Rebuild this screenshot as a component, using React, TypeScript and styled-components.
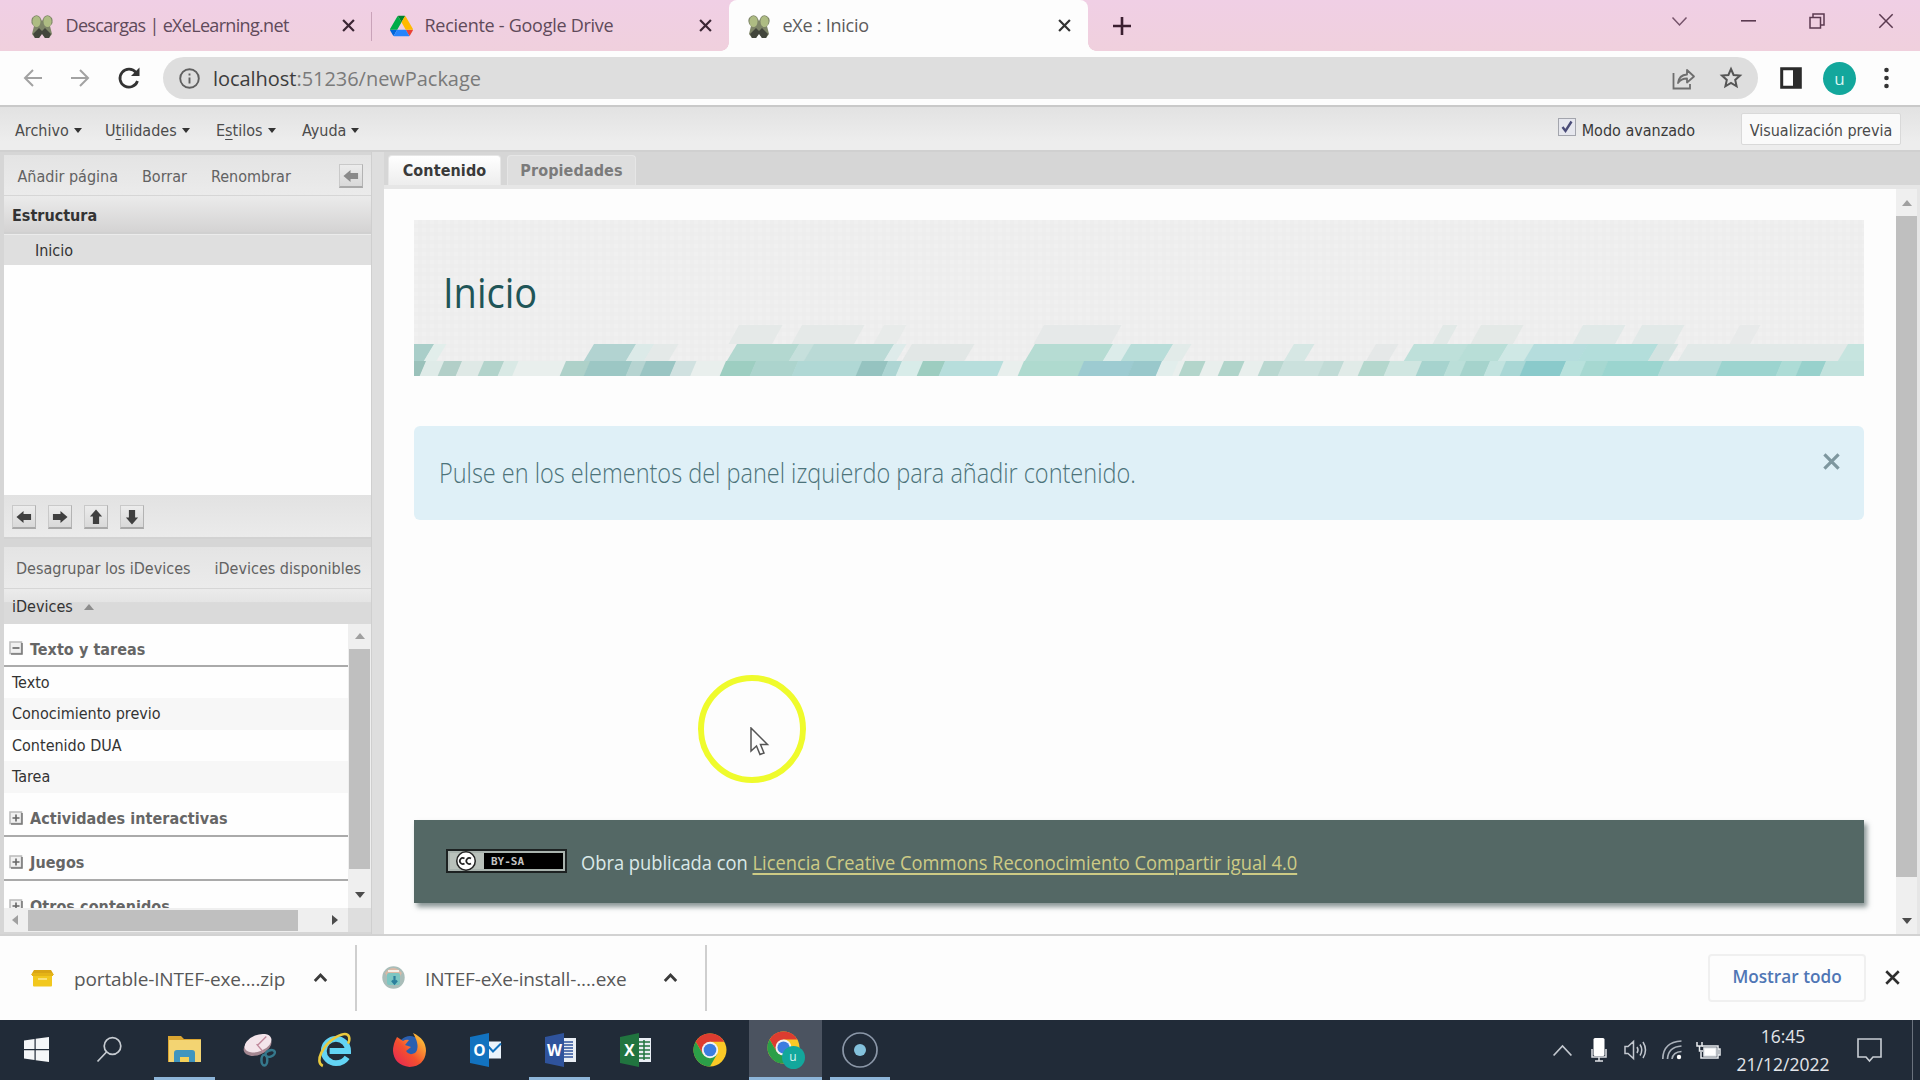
import React from "react";
import styled, { createGlobalStyle, css } from "styled-components";

const GlobalStyle = createGlobalStyle`
  * { box-sizing: border-box; }
  body { margin: 0; background: #fdfdfd; overflow: hidden; }
  button, a { font: inherit; }
`;

const uiFont = css`
  font-family: "Open Sans", "Noto Sans", sans-serif;
`;
const tahoma = css`
  font-family: "DejaVu Sans Condensed", "Noto Sans", sans-serif;
  font-size: 16px;
`;

const Screen = styled.div`
  width: 1920px;
  height: 1080px;
  display: flex;
  flex-direction: column;
  position: relative;
  overflow: hidden;
  background: #fdfdfd;
`;

const Icon = styled.svg<{ $w: number; $h?: number }>`
  width: ${(p) => p.$w}px;
  height: ${(p) => p.$h ?? p.$w}px;
  flex: none;
  display: block;
  overflow: visible;
`;

/* ---------- browser tab strip ---------- */
const TabStrip = styled.div`
  height: 51px;
  flex: none;
  display: flex;
  background: linear-gradient(#f0cfe5, #f0d0dd);
  ${uiFont}
`;
const BrowserTab = styled.div<{ $w: number; $active?: boolean; $pad: number; $divider?: boolean }>`
  position: relative;
  width: ${(p) => p.$w}px;
  height: 51px;
  display: flex;
  align-items: center;
  padding: 0 17px 0 ${(p) => p.$pad}px;
  color: #5f4a5a;
  font-size: 18px;
  ${(p) =>
    p.$active &&
    css`
      background: #fdfdfd;
      border-radius: 8px 8px 0 0;
      color: #5c5c5c;
      &::before,
      &::after {
        content: "";
        position: absolute;
        bottom: 0;
        width: 8px;
        height: 8px;
      }
      &::before { left: -8px; background: radial-gradient(circle at 0 0, transparent 7.5px, #fdfdfd 8px); }
      &::after { right: -8px; background: radial-gradient(circle at 100% 0, transparent 7.5px, #fdfdfd 8px); }
    `}
  ${(p) =>
    p.$divider &&
    css`
      &::after {
        content: "";
        position: absolute;
        right: 0;
        top: 12px;
        width: 1.5px;
        height: 29px;
        background: #c9a3b9;
      }
    `}
`;
const TabTitle = styled.span<{ $ls?: number }>`
  margin: -1px auto 0 11.5px;
  white-space: nowrap;
  letter-spacing: ${(p) => p.$ls ?? 0}px;
`;
const NewTab = styled.button`
  margin: 0 0 0 24px;
  padding: 0;
  border: 0;
  background: none;
  display: flex;
  align-items: center;
`;
const WindowControls = styled.div`
  margin-left: auto;
  display: flex;
  height: 42px;
  align-items: center;
`;
const WindowButton = styled.span`
  width: 68.7px;
  display: flex;
  justify-content: center;
`;

/* ---------- address bar ---------- */
const AddressRow = styled.div`
  height: 54px;
  flex: none;
  display: flex;
  align-items: center;
  background: #fdfdfd;
  padding: 0 0 0 23px;
  ${uiFont}
`;
const NavIcons = styled.div`
  display: flex;
  align-items: center;
  gap: 27px;
  width: 140px;
  flex: none;
`;
const UrlPill = styled.div`
  width: 1595px;
  height: 42px;
  border-radius: 21px;
  background: #dedede;
  display: flex;
  align-items: center;
  padding: 0 16px 0 16px;
  font-size: 20px;
  color: #7a7a7a;
`;
const Url = styled.span`
  margin: 0 auto 0 13px;
  letter-spacing: -0.04px;
`;
const Host = styled.span`
  color: #3c3c3c;
`;
const Avatar = styled.span<{ $size: number; $font: number }>`
  width: ${(p) => p.$size}px;
  height: ${(p) => p.$size}px;
  border-radius: 50%;
  background: #13a79c;
  color: #d8f5f2;
  display: flex;
  align-items: center;
  justify-content: center;
  font-family: "Open Sans", sans-serif;
  font-size: ${(p) => p.$font}px;
  line-height: 1;
`;
const PillIcons = styled.div`
  display: flex;
  gap: 25px;
  align-items: center;
`;
const RightIcons = styled.div`
  display: flex;
  align-items: center;
  gap: 21px;
  padding-left: 22px;
  > :last-child { margin-left: 6px; }
`;

/* ---------- application menu ---------- */
const MenuBar = styled.div`
  height: 47px;
  flex: none;
  display: flex;
  align-items: center;
  border-top: 2px solid #c9c9c9;
  border-bottom: 2px solid #d0d0d0;
  background: linear-gradient(#e2e2e2, #ededed 80%);
  padding: 3px 19px 0 15px;
  color: #4c4c4c;
  ${tahoma}
`;
const MenuItem = styled.span<{ $w: number }>`
  width: ${(p) => p.$w}px;
  display: flex;
  align-items: center;
  gap: 5px;
  u { text-underline-offset: 3px; }
`;
const Caret = styled.i<{ $dir?: "up" | "down" | "left" | "right"; $color?: string; $s?: number }>`
  width: 0;
  height: 0;
  flex: none;
  border: ${(p) => p.$s ?? 4}px solid transparent;
  ${(p) => {
    const s = p.$s ?? 4;
    const c = p.$color ?? "#333";
    if (p.$dir === "up") return `border-top: 0; border-bottom: ${s + 1}px solid ${c};`;
    if (p.$dir === "left") return `border-left: 0; border-right: ${s + 1}px solid ${c};`;
    if (p.$dir === "right") return `border-right: 0; border-left: ${s + 1}px solid ${c};`;
    return `border-bottom: 0; border-top: ${s + 1}px solid ${c};`;
  }}
`;
const CheckLabel = styled.label`
  margin-left: auto;
  display: flex;
  align-items: center;
  gap: 6px;
  color: #3a3a3a;
`;
const CheckBox = styled.span`
  width: 18px;
  height: 18px;
  margin-top: -6px;
  border: 1.5px solid #a3a5ad;
  background: #e6e7ee;
  display: flex;
  align-items: center;
  justify-content: center;
`;
const PreviewButton = styled.button`
  margin: -3px 0 0 46px;
  width: 160px;
  height: 32px;
  padding: 4px 0 0;
  border: 1px solid #d9d9d9;
  border-radius: 2px;
  background: #fafafa;
  color: #4a4a4a;
  ${tahoma}
`;

/* ---------- workspace ---------- */
const Workspace = styled.div`
  height: 784px;
  flex: none;
  display: flex;
  background: #dedede;
  border-bottom: 2px solid #d2d2d2;
`;
const Sidebar = styled.aside`
  width: 372px;
  margin-right: 12px;
  flex: none;
  padding: 3px 0 0 4px;
  display: flex;
  flex-direction: column;
  border-right: 1px solid #cfcfcf;
  background: #d6d6d6;
  color: #333;
  ${tahoma}
`;
const SideTools = styled.div<{ $h: number; $gap: number; $pl: number }>`
  height: ${(p) => p.$h}px;
  flex: none;
  display: flex;
  align-items: center;
  gap: ${(p) => p.$gap}px;
  padding: 2px 8px 0 ${(p) => p.$pl}px;
  color: #626262;
  background: linear-gradient(#e4e4e4, #ebebeb);
  border-bottom: 1px solid #d6d6d6;
`;
const SquareButton = styled.button<{ $push?: boolean }>`
  width: 24px;
  height: 24px;
  padding: 0;
  flex: none;
  margin-left: ${(p) => (p.$push ? "auto" : "0")};
  border: 1px solid #c9c9c9;
  border-bottom: 2px solid #a9a9a9;
  border-right-color: #b3b3b3;
  background: linear-gradient(#ececec, #d9d9d9);
  display: flex;
  align-items: center;
  justify-content: center;
`;
const PanelHeader = styled.div<{ $h: number; $bold?: boolean }>`
  height: ${(p) => p.$h}px;
  flex: none;
  display: flex;
  align-items: center;
  gap: 11px;
  padding: 2px 0 0 8px;
  font-weight: ${(p) => (p.$bold ? 700 : 400)};
  background: ${(p) =>
    p.$bold ? "linear-gradient(#ebebeb, #d4d3d3)" : "linear-gradient(#ebebeb, #e4e4e4 40%, #dadada 41%, #dadada)"};
  border-bottom: 2px solid ${(p) => (p.$bold ? "#d0d0d0" : "#dadada")};
`;
const TreeArea = styled.div`
  height: 261px;
  flex: none;
  background: #fefefe;
`;
const TreeRow = styled.div`
  height: 31px;
  padding-left: 31px;
  background: #dfdfdf;
  border-top: 1px solid #ebebeb;
  line-height: 32px;
`;
const MoveBar = styled.div`
  height: 44px;
  flex: none;
  margin-bottom: 8px;
  display: flex;
  align-items: center;
  gap: 12px;
  padding: 2px 0 0 8px;
  background: linear-gradient(#e2e2e2, #ebebeb);
  border-bottom: 2px solid #d2d2d2;
`;
const DeviceArea = styled.div`
  height: 284px;
  flex: none;
  display: flex;
  background: #fefefe;
`;
const DeviceList = styled.div`
  width: 344px;
  height: 284px;
  overflow: hidden;
`;
const Group = styled.div<{ $h: number }>`
  height: ${(p) => p.$h}px;
  display: flex;
  align-items: flex-end;
  gap: 7px;
  padding: 0 0 2px 5px;
  line-height: 24px;
  font-weight: 700;
  color: #666;
  border-bottom: 2px solid #aaa;
  span { padding-bottom: 1.5px; letter-spacing: 0.06px; }
  svg { margin-bottom: 8px; }
`;
const DeviceRow = styled.div<{ $alt?: boolean }>`
  height: 31.4px;
  line-height: 31px;
  padding-left: 8px;
  background: ${(p) => (p.$alt ? "#f7f7f7" : "#fefefe")};
`;
const VScroll = styled.div<{ $w: number; $pt: number }>`
  width: ${(p) => p.$w}px;
  flex: none;
  display: flex;
  flex-direction: column;
  align-items: center;
  justify-content: space-between;
  background: #efefef;
  padding: ${(p) => p.$pt}px 0 10px;
`;
const VThumb = styled.div<{ $h: number; $mb: number }>`
  width: 21px;
  height: ${(p) => p.$h}px;
  margin-bottom: ${(p) => p.$mb}px;
  background: #bfbfbf;
`;
const HScroll = styled.div`
  width: 344px;
  height: 24px;
  display: flex;
  align-items: center;
  padding: 0 10px 0 8px;
  background: #efefef;
`;
const HThumb = styled.div`
  width: 270px;
  height: 21px;
  margin: 0 auto 0 10px;
  background: #bfbfbf;
`;
const ScrollRow = styled.div`
  display: flex;
  height: 24px;
  flex: none;
  background: #dedede;
`;

const Main = styled.main`
  flex: 1;
  display: flex;
  flex-direction: column;
`;
const ContentTabs = styled.div`
  height: 37px;
  flex: none;
  display: flex;
  align-items: flex-end;
  gap: 6px;
  padding-left: 4px;
  background: #d6d6d6;
  border-bottom: 4px solid #e6e6e6;
`;
const ContentTab = styled.span<{ $w: number; $active?: boolean }>`
  width: ${(p) => p.$w}px;
  height: 30px;
  border-radius: 4px 4px 0 0;
  border: 1px solid #e6e6e6;
  border-bottom: 0;
  background: ${(p) => (p.$active ? "linear-gradient(#fff, #ededed)" : "#dedede")};
  color: ${(p) => (p.$active ? "#3a3a3a" : "#7b7b7b")};
  text-align: center;
  line-height: 30px;
  font-weight: 700;
  letter-spacing: 0.1px;
  ${tahoma}
`;
const PageArea = styled.div`
  flex: 1;
  display: flex;
  background: #fdfdfd;
  border-right: 3px solid #e6e6e6;
`;
const Page = styled.div`
  flex: 1;
  padding: 31px 32px 0 30px;
  display: flex;
  flex-direction: column;
`;
const narrow = (ratio: number) => css`
  white-space: nowrap;
  transform: scaleX(${ratio});
  transform-origin: 0 50%;
`;
const Banner = styled.header`
  height: 156px;
  flex: none;
  display: grid;
  background: #eee;
  > * { grid-area: 1 / 1; }
`;
const BannerTitle = styled.h1`
  margin: 0 0 0 29px;
  padding: 43px 0 0;
  font: 400 42px/58px "Open Sans", sans-serif;
  color: #1f5557;
  ${narrow(0.905)}
`;
const Alert = styled.div`
  height: 94px;
  flex: none;
  margin-top: 50px;
  border-radius: 6px;
  background: #dff0f7;
  display: flex;
  justify-content: space-between;
  padding: 0 24px 0 25px;
  svg { margin-top: 27px; }
`;
const AlertText = styled.p`
  margin: 0;
  width: 740px;
  font: 300 27px/94px "Open Sans", sans-serif;
  color: #4c737a;
  ${narrow(0.87)}
`;
const Footer = styled.footer`
  height: 83px;
  flex: none;
  margin-top: 300px;
  background: #546865;
  box-shadow: 3px 4px 5px rgba(60, 80, 80, 0.6);
  display: flex;
  align-items: center;
  padding: 2px 0 0 32px;
`;
const FooterText = styled.p`
  margin: 0 0 0 14px;
  font: 400 20px/28px "Open Sans", sans-serif;
  color: #dbe9e8;
  ${narrow(0.915)}
`;
const LicenceLink = styled.a`
  color: #cdcb85;
  text-decoration: underline;
  text-decoration-thickness: 1.5px;
  text-underline-offset: 3px;
`;
const CcBadge = styled.span`
  width: 121px;
  height: 24px;
  margin-top: -3px;
  border: 2px solid #1d2222;
  background: #000;
  box-shadow: inset 0 0 0 2px #a9b3ae;
  display: flex;
  align-items: center;
  gap: 7px;
  color: #c4c4c4;
  font: 700 11px/1 "DejaVu Sans Mono", monospace;
`;

/* ---------- downloads shelf ---------- */
const Shelf = styled.div`
  height: 84px;
  flex: none;
  display: flex;
  align-items: center;
  background: #fdfdfd;
  padding-bottom: 1px;
  ${uiFont}
`;
const Download = styled.div<{ $w: number; $pl: number }>`
  width: ${(p) => p.$w}px;
  height: 66px;
  display: flex;
  align-items: center;
  justify-content: space-between;
  padding: 0 28px 0 ${(p) => p.$pl}px;
  border-right: 2px solid #cfcfcf;
  font-size: 19px;
  color: #585858;
`;
const FileName = styled.span`
  margin: 2px auto 0 20px;
  letter-spacing: -0.13px;
`;
const ShowAll = styled.button`
  margin: 0 19px 0 auto;
  width: 158px;
  height: 48px;
  padding: 0 0 3px;
  border: 2px solid #f0f0f0;
  border-radius: 4px;
  background: #fdfdfd;
  color: #4f76b5;
  font: 600 17.2px "Open Sans", sans-serif;
`;
const ShelfClose = styled.span`
  width: 35px;
`;

/* ---------- taskbar ---------- */
const Taskbar = styled.div`
  height: 60px;
  flex: none;
  display: flex;
  background: #212b38;
  color: #e3e6ea;
  ${uiFont}
`;
const TaskButton = styled.span<{ $w?: number; $line?: number; $active?: boolean }>`
  width: ${(p) => p.$w ?? 75}px;
  height: 60px;
  flex: none;
  display: flex;
  align-items: center;
  justify-content: center;
  padding-bottom: 1px;
  background: ${(p) =>
    `${p.$line ? "linear-gradient(#8db5d9,#8db5d9) center bottom / " + p.$line + "px 3px no-repeat," : ""} ${
      p.$active ? "#4b5360" : "transparent"
    }`};
`;
const Tray = styled.div`
  margin-left: auto;
  display: flex;
  align-items: center;
`;
const TrayIcon = styled.span<{ $w: number }>`
  width: ${(p) => p.$w}px;
  display: flex;
  justify-content: center;
`;
const Clock = styled.div`
  width: 112px;
  text-align: center;
  font-size: 17.5px;
  line-height: 28px;
  margin-left: 3px;
`;
const DesktopEdge = styled.span`
  height: 60px;
  width: 8px;
  border-left: 1.5px solid #6a727d;
`;

/* ---------- pointer highlight ---------- */
const Pointer = styled.div`
  position: absolute;
  left: 698px;
  top: 675px;
  width: 108px;
  height: 108px;
  border: 6px solid #effb2c;
  border-radius: 50%;
`;
const PointerArrow = styled.svg`
  position: absolute;
  left: 46px;
  top: 46px;
  width: 20px;
  height: 30px;
`;

const Cross = ({ s, c, w = 2.2 }: { s: number; c: string; w?: number }) => (
  <Icon $w={s} viewBox="0 0 12 12" fill="none" stroke={c} strokeWidth={(w * 12) / s}>
    <path d="M1 1 11 11M11 1 1 11" />
  </Icon>
);

const ExeFavicon = () => (
  <Icon $w={24} viewBox="0 0 24 24">
    <path d="M2 4Q6-1 10 3L12 7 14 3Q18-1 22 4Q24 9 20 12L22 20 19 24H15L12 19 9 24H5L2 20 4 12Q0 9 2 4Z" fill="#7e8568" />
    <ellipse cx="6.5" cy="7.500" rx="4" ry="5.600" fill="#aebc83" />
    <ellipse cx="17.5" cy="7.500" rx="4" ry="5.600" fill="#aebc83" />
    <path d="M3 20 9 14 12 17 15 14 21 20 19 24H15L12 20 9 24H5Z" fill="#43463c" />
  </Icon>
);

const DriveIcon = () => (
  <Icon $w={23} $h={22} viewBox="0 0 87.3 78">
    <path d="m6.6 66.85 3.85 6.65c.8 1.4 1.95 2.5 3.3 3.3l13.75-23.8h-27.5c0 1.55.4 3.1 1.2 4.5z" fill="#0066da" />
    <path d="m43.65 25-13.75-23.8c-1.35.8-2.5 1.9-3.3 3.3l-25.4 44a9 9 0 0 0-1.2 4.5h27.5z" fill="#00ac47" />
    <path d="m73.55 76.8c1.35-.8 2.5-1.9 3.3-3.3l1.6-2.75 7.65-13.25c.8-1.4 1.2-2.95 1.2-4.5h-27.5l5.85 11.5z" fill="#ea4335" />
    <path d="m43.65 25 13.75-23.8c-1.35-.8-2.9-1.2-4.5-1.2h-18.5c-1.6 0-3.15.45-4.5 1.2z" fill="#00832d" />
    <path d="m59.8 53h-32.3l-13.75 23.8c1.35.8 2.9 1.2 4.5 1.2h50.8c1.6 0 3.15-.45 4.5-1.2z" fill="#2684fc" />
    <path d="m73.4 26.5-12.7-22c-.8-1.4-1.95-2.5-3.3-3.3l-13.75 23.8 16.15 28h27.45c0-1.55-.4-3.1-1.2-4.5z" fill="#ffba00" />
  </Icon>
);

const Arrow = ({ turn = 0, c = "#3f3f3f" }: { turn?: number; c?: string }) => (
  <Icon $w={16} viewBox="0 0 17 17">
    <path d="M.5 8.500 8 2V5.200H16V11.800H8V15Z" fill={c} transform={`rotate(${turn} 8.5 8.5)`} />
  </Icon>
);

const Toggle = ({ plus }: { plus?: boolean }) => (
  <Icon $w={14} viewBox="0 0 14 14" fill="none">
    <path d="M1 1H12.500V12.500H1Z" fill="#f1f1f1" stroke="#bbb" strokeWidth="1.5" />
    <path d="M13 2V13H2" stroke="#777" strokeWidth="1.5" />
    <path d={plus ? "M3.500 7H10.500M7 3.500V10.500" : "M3.500 7H10.500"} stroke="#666" strokeWidth="1.6" />
  </Icon>
);

/* x at the top edge of the cell, width, row, colour */
type Cell = [number, number, 0 | 1 | 2, string];
const rowTop = [105, 124, 141];
const rowHeight = [19, 17, 15];
const rowSlant = [0.55, 0.6, 0.42];
const cells: Cell[] = [
  [325, 43, 0, "#e5e9e8"], [388, 62, 0, "#e5e9e8"], [470, 22, 0, "#e8ebea"], [630, 77, 0, "#e6e9e9"],
  [1029, 14, 0, "#e2e9e7"], [1067, 42, 0, "#e4e9e7"], [1169, 42, 0, "#e1e9e8"], [1228, 42, 0, "#e2e9e8"], [1326, 20, 0, "#e8eaea"],
  [-20, 40, 1, "#a9cec9"], [20, 12, 1, "#e2eeeb"], [180, 42, 1, "#b2d3d1"], [222, 18, 1, "#dceae8"], [240, 24, 1, "#e4e9e8"],
  [323, 62, 1, "#b3d8d0"], [385, 15, 1, "#c6e0dc"], [400, 80, 1, "#badad6"], [480, 12, 1, "#deebea"], [498, 62, 1, "#e2e7e6"],
  [621, 78, 1, "#b6dcd3"], [699, 18, 1, "#dcecea"], [717, 42, 1, "#b8ddd9"], [759, 18, 1, "#e2ebe9"],
  [880, 20, 1, "#d6e7e4"], [962, 22, 1, "#e5e8e8"], [1000, 54, 1, "#bee0da"], [1054, 40, 1, "#b8ded7"], [1094, 26, 1, "#cfe8e5"],
  [1120, 54, 1, "#b5dddd"], [1174, 70, 1, "#b3dedb"], [1244, 20, 1, "#d3e3e1"], [1274, 160, 1, "#e2e9e8"], [1434, 60, 1, "#c6e4df"],
  [-20, 32, 2, "#9ac1ba"], [12, 18, 2, "#dfebe8"], [30, 18, 2, "#b2cfc8"], [48, 22, 2, "#dfe9e6"], [70, 20, 2, "#b2d3cb"], [90, 14, 2, "#d9e9e5"],
  [152, 24, 2, "#aed1c9"], [176, 42, 2, "#9cc7c4"], [218, 14, 2, "#b6d4d1"], [232, 30, 2, "#9ac5c3"], [262, 20, 2, "#d0e1e0"],
  [312, 30, 2, "#9dcec1"], [342, 42, 2, "#acd4cd"], [384, 64, 2, "#b0d8d5"], [448, 26, 2, "#95c3c0"], [474, 14, 2, "#add5d3"], [488, 21, 2, "#d8ece9"],
  [509, 22, 2, "#9dcdc0"], [531, 58, 2, "#b7dedc"], [610, 60, 2, "#afdacf"], [670, 50, 2, "#9dcbd1"], [720, 28, 2, "#99c8cb"], [748, 16, 2, "#e2eeec"],
  [771, 20, 2, "#b3d5cb"], [810, 20, 2, "#b0d4ca"], [850, 20, 2, "#b9d7d0"], [870, 40, 2, "#cbe1dd"], [910, 20, 2, "#c1dbd6"], [930, 20, 2, "#e1ebe8"],
  [950, 26, 2, "#b4d7cd"], [976, 32, 2, "#d0e6e1"], [1008, 28, 2, "#a6d3ce"], [1036, 16, 2, "#bbdfd9"], [1052, 24, 2, "#a5d3cc"], [1076, 16, 2, "#c2e3df"],
  [1092, 20, 2, "#a9d7d5"], [1112, 40, 2, "#8acacb"], [1152, 20, 2, "#b8e1dc"], [1172, 22, 2, "#a6d8d1"], [1194, 56, 2, "#9bd5cf"], [1250, 58, 2, "#b5dbd9"],
  [1308, 60, 2, "#9cd4cf"], [1368, 20, 2, "#addcd6"], [1388, 24, 2, "#98d1cc"], [1412, 60, 2, "#c2e2dd"],
];

const BannerArt = () => (
  <Icon $w={1450} $h={156} viewBox="0 0 1450 156">
    <defs>
      <pattern id="weave" width="8" height="8" patternUnits="userSpaceOnUse">
        <rect width="4" height="4" fill="#f0f0f0" />
        <rect x="4" y="4" width="4" height="4" fill="#ededed" />
      </pattern>
      <clipPath id="frame"><rect width="1450" height="156" /></clipPath>
    </defs>
    <rect width="1450" height="156" fill="#eee" />
    <rect width="1450" height="156" fill="url(#weave)" />
    <g clipPath="url(#frame)">
      <rect y="141" width="1450" height="15" fill="#e9efed" />
      {cells.map(([x, w, r, c], i) => {
        const t = rowTop[r], h = rowHeight[r], d = h * rowSlant[r];
        return <polygon key={i} fill={c} points={`${x},${t} ${x + w + 0.5},${t} ${x + w + 0.5 - d},${t + h} ${x - d},${t + h}`} />;
      })}
    </g>
  </Icon>
);

const ChromeLogo = ({ s = 34 }: { s?: number }) => (
  <Icon $w={s} viewBox="0 0 34 34">
    <circle cx="17" cy="17" r="16.500" fill="#fbc926" />
    <path d="M2.700 8.750A16.500 16.500 0 0 1 31.300 8.750H17L9.850 21.100Z" fill="#dc3c30" />
    <path d="M2.700 8.750A16.500 16.500 0 0 0 17 33.500L24.150 21.100 17 25 9.850 21.100Z" fill="#2b9f48" />
    <circle cx="17" cy="17" r="8.200" fill="#f3f3f3" />
    <circle cx="17" cy="17" r="6.300" fill="#3c7de0" />
  </Icon>
);

const GlyphText = styled.text`
  font-family: "Open Sans", sans-serif;
  font-weight: 700;
  fill: #fff;
`;
const OfficeIcon = ({ letter, color, kind }: { letter: string; color: string; kind: "mail" | "doc" | "grid" }) => (
  <Icon $w={32} $h={34} viewBox="0 0 32 34">
    {kind !== "mail" && <rect x="17" y="5" width="15" height="24" fill="#e9eef5" />}
    {kind === "mail" && <path d="M17 8.500H32V25.500H17Z" fill="#eaf3fb" />}
    {kind === "mail" && <path d="M18 12 24 18.500 32 10.500" fill="none" stroke={color} strokeWidth="2" />}
    {kind === "doc" && <path d="M20 9H29M20 12H29M20 15H29M20 18H29M20 21H29M20 24H29" stroke={color} strokeWidth="1.3" />}
    {kind === "grid" && <path d="M20 9H31M20 13H31M20 17H31M20 21H31M20 25H31M25 7V27" stroke={color} strokeWidth="1.5" />}
    <path d="M1 4 20 0V34L1 30Z" fill={color} />
    <GlyphText x="10.500" y="22.500" fontSize="15.500" textAnchor="middle">{letter}</GlyphText>
  </Icon>
);

const ActiveChrome = styled.span`
  display: grid;
  width: 38px;
  height: 38px;
  > * { grid-area: 1 / 1; }
  > :last-child { place-self: end; }
`;

export default function App() {
  return (
    <Screen>
      <GlobalStyle />
      <TabStrip>
        <BrowserTab $w={372} $pad={30} $divider>
          <ExeFavicon />
          <TabTitle $ls={-0.68}>Descargas | eXeLearning.net</TabTitle>
          <Cross s={13} c="#3b2634" />
        </BrowserTab>
        <BrowserTab $w={357} $pad={18}>
          <DriveIcon />
          <TabTitle $ls={-0.27}>Reciente - Google Drive</TabTitle>
          <Cross s={13} c="#3b2634" />
        </BrowserTab>
        <BrowserTab $w={359} $pad={18} $active>
          <ExeFavicon />
          <TabTitle $ls={-0.25}>eXe : Inicio</TabTitle>
          <Cross s={13} c="#333" />
        </BrowserTab>
        <NewTab>
          <Icon $w={20} viewBox="0 0 20 20" stroke="#3b1f30" strokeWidth="2.600"><path d="M10 1V19M1 10H19" /></Icon>
        </NewTab>
        <WindowControls>
          <WindowButton><Icon $w={15} $h={9} viewBox="0 0 15 9" fill="none" stroke="#75536a" strokeWidth="1.500"><path d="M.5 .5 7.500 8 14.500 .5" /></Icon></WindowButton>
          <WindowButton><Icon $w={15} $h={2} viewBox="0 0 15 2"><rect width="15" height="1.600" fill="#5b3a50" /></Icon></WindowButton>
          <WindowButton><Icon $w={16} viewBox="0 0 16 16" fill="none" stroke="#5b3a50" strokeWidth="1.500"><path d="M1 4.500H11.500V15H1ZM4 4V1H15V12H12" /></Icon></WindowButton>
          <WindowButton><Cross s={16} c="#5b3a50" w={1.500} /></WindowButton>
        </WindowControls>
      </TabStrip>

      <AddressRow>
        <NavIcons>
          <Icon $w={20} viewBox="0 0 20 20" fill="none" stroke="#a2a2a2" strokeWidth="2"><path d="M19 10H2M10 2 2 10 10 18" /></Icon>
          <Icon $w={20} viewBox="0 0 20 20" fill="none" stroke="#a2a2a2" strokeWidth="2"><path d="M1 10H18M10 2 18 10 10 18" /></Icon>
          <Icon $w={24} viewBox="0 0 24 24" fill="none" stroke="#333" strokeWidth="2.700"><path d="M20.500 15A9 9 0 1 1 19 6.500" /><path d="M22.500 1.500V10H14Z" fill="#333" stroke="none" /></Icon>
        </NavIcons>
        <UrlPill>
          <Icon $w={21} viewBox="0 0 21 21" fill="none" stroke="#606060" strokeWidth="1.900"><circle cx="10.500" cy="10.500" r="9.300" /><path d="M10.500 9.500V15.500M10.500 5.500V7.500" /></Icon>
          <Url><Host>localhost</Host>:51236/newPackage</Url>
          <PillIcons>
            <Icon $w={23} viewBox="0 0 23 23" fill="none" stroke="#6e6e6e" strokeWidth="1.800"><path d="M1.500 6V21.500H18V17" /><path d="M6 16Q7 8 15 7.500V3L22 9.500 15 15.500V11.500Q9 11.500 6 16Z" strokeLinejoin="round" /></Icon>
            <Icon $w={22} viewBox="0 0 22 22" fill="none" stroke="#555" strokeWidth="2"><path d="M11 2 13.600 8 20 8.600 15.200 12.900 16.600 19.300 11 16 5.400 19.300 6.800 12.900 2 8.600 8.400 8Z" /></Icon>
          </PillIcons>
        </UrlPill>
        <RightIcons>
          <Icon $w={22} viewBox="0 0 22 22"><path d="M1.700 1.700H20.300V20.300H1.700Z" fill="#fff" stroke="#2b2b2b" strokeWidth="3" /><rect x="13" y="1" width="8" height="20" fill="#2b2b2b" /></Icon>
          <Avatar $size={33} $font={17}>u</Avatar>
          <Icon $w={6} $h={22} viewBox="0 0 6 22" fill="#333"><circle cx="3.500" cy="3" r="2.300" /><circle cx="3.500" cy="11" r="2.300" /><circle cx="3.500" cy="19" r="2.300" /></Icon>
        </RightIcons>
      </AddressRow>

      <MenuBar>
        <MenuItem $w={90}>Archivo<Caret /></MenuItem>
        <MenuItem $w={111}><span>U<u>t</u>ilidades</span><Caret /></MenuItem>
        <MenuItem $w={86}><span>E<u>s</u>tilos</span><Caret /></MenuItem>
        <MenuItem $w={80}>Ayuda<Caret /></MenuItem>
        <CheckLabel>
          <CheckBox>
            <Icon $w={12} viewBox="0 0 12 12" fill="none" stroke="#4a4c78" strokeWidth="2.400"><path d="M1.500 6 4.500 10 10.500 .5" /></Icon>
          </CheckBox>
          Modo avanzado
        </CheckLabel>
        <PreviewButton>Visualización previa</PreviewButton>
      </MenuBar>

      <Workspace>
        <Sidebar>
          <SideTools $h={41} $gap={24} $pl={13.5}>
            <span>Añadir página</span><span>Borrar</span><span>Renombrar</span>
            <SquareButton $push><Arrow c="#8a8a8a" /></SquareButton>
          </SideTools>
          <PanelHeader $h={38} $bold>Estructura</PanelHeader>
          <TreeArea><TreeRow>Inicio</TreeRow></TreeArea>
          <MoveBar>
            <SquareButton><Arrow /></SquareButton>
            <SquareButton><Arrow turn={180} /></SquareButton>
            <SquareButton><Arrow turn={90} /></SquareButton>
            <SquareButton><Arrow turn={270} /></SquareButton>
          </MoveBar>
          <SideTools $h={42} $gap={24} $pl={12}>
            <span>Desagrupar los iDevices</span><span>iDevices disponibles</span>
          </SideTools>
          <PanelHeader $h={35}>iDevices<Caret $dir="up" $color="#8d8d8d" $s={5} /></PanelHeader>
          <DeviceArea>
            <DeviceList>
              <Group $h={43}><Toggle /><span>Texto y tareas</span></Group>
              <DeviceRow>Texto</DeviceRow>
              <DeviceRow $alt>Conocimiento previo</DeviceRow>
              <DeviceRow>Contenido DUA</DeviceRow>
              <DeviceRow $alt>Tarea</DeviceRow>
              <Group $h={44}><Toggle plus /><span>Actividades interactivas</span></Group>
              <Group $h={44}><Toggle plus /><span>Juegos</span></Group>
              <Group $h={44}><Toggle plus /><span>Otros contenidos</span></Group>
            </DeviceList>
            <VScroll $w={23} $pt={9}>
              <Caret $dir="up" $color="#a0a0a0" $s={5} />
              <VThumb $h={220} $mb={13} />
              <Caret $color="#4c4c4c" $s={5} />
            </VScroll>
          </DeviceArea>
          <ScrollRow>
            <HScroll>
              <Caret $dir="left" $color="#a0a0a0" $s={5} />
              <HThumb />
              <Caret $dir="right" $color="#4c4c4c" $s={5} />
            </HScroll>
          </ScrollRow>
        </Sidebar>

        <Main>
          <ContentTabs>
            <ContentTab $w={113} $active>Contenido</ContentTab>
            <ContentTab $w={129}>Propiedades</ContentTab>
          </ContentTabs>
          <PageArea>
            <Page>
              <Banner>
                <BannerArt />
                <BannerTitle>Inicio</BannerTitle>
              </Banner>
              <Alert>
                <AlertText>Pulse en los elementos del panel izquierdo para añadir contenido.</AlertText>
                <Cross s={17} c="#7e979f" w={3.200} />
              </Alert>
              <Footer>
                <CcBadge>
                  <Icon $w={36} $h={20} viewBox="0 0 36 20">
                    <rect x="2" y="2" width="34" height="16" fill="#b9c1bb" />
                    <circle cx="18" cy="10" r="10" fill="#222" />
                    <circle cx="18" cy="10" r="8.500" fill="#fff" />
                    <path d="M16.500 7.500A3 3 0 1 0 16.500 12.500M23 7.500A3 3 0 1 0 23 12.500" fill="none" stroke="#222" strokeWidth="1.700" />
                  </Icon>
                  BY-SA
                </CcBadge>
                <FooterText>
                  Obra publicada con <LicenceLink>Licencia Creative Commons Reconocimiento Compartir igual 4.0</LicenceLink>
                </FooterText>
              </Footer>
            </Page>
            <VScroll $w={21} $pt={11}>
              <Caret $dir="up" $color="#a0a0a0" $s={5} />
              <VThumb $h={661} $mb={32} />
              <Caret $color="#4c4c4c" $s={5} />
            </VScroll>
          </PageArea>
        </Main>
      </Workspace>

      <Shelf>
        <Download $w={357} $pl={31}>
          <Icon $w={23} $h={18} viewBox="0 0 23 18">
            <path d="M3 1H20L23 6H0Z" fill="#d9a514" /><rect x="2" y="5" width="19" height="12.500" rx="1" fill="#f2c81e" /><path d="M1 4H22V7H1Z" fill="#e5b416" /><rect x="7" y="9" width="9" height="2" fill="#f9e27a" />
          </Icon>
          <FileName>portable-INTEF-exe....zip</FileName>
          <Icon $w={13} $h={9} viewBox="0 0 13 9" fill="none" stroke="#3b3b3b" strokeWidth="2.800"><path d="M.8 8 6.500 2 12.200 8" /></Icon>
        </Download>
        <Download $w={350} $pl={25}>
          <Icon $w={23} viewBox="0 0 23 23">
            <circle cx="11.500" cy="11.500" r="11.200" fill="#a9bdb9" /><path d="M3 7Q11-3 20 7L18 10H5Z" fill="#d9b9a6" /><rect x="5" y="7" width="13" height="12" rx="2" fill="#7cc6c2" /><path d="M12.500 10V17M10 14.500 12.500 17.500 15 14.500" stroke="#2b7f9c" strokeWidth="2.200" fill="none" /><path d="M6 5H17" stroke="#f4efe8" strokeWidth="2" />
          </Icon>
          <FileName>INTEF-eXe-install-....exe</FileName>
          <Icon $w={13} $h={9} viewBox="0 0 13 9" fill="none" stroke="#3b3b3b" strokeWidth="2.800"><path d="M.8 8 6.500 2 12.200 8" /></Icon>
        </Download>
        <ShowAll>Mostrar todo</ShowAll>
        <ShelfClose><Cross s={15} c="#2e2e2e" w={2.600} /></ShelfClose>
      </Shelf>

      <Taskbar>
        <TaskButton $w={72}>
          <Icon $w={25} viewBox="0 0 25 25" fill="#f4f6f8"><path d="M0 3.500 10.500 2V12H0ZM11.700 1.800 25 0V12H11.700ZM0 13.200H10.500V23L0 21.500ZM11.700 13.200H25V25L11.700 23.200Z" /></Icon>
        </TaskButton>
        <TaskButton $w={74}>
          <Icon $w={25} viewBox="0 0 25 25" fill="none" stroke="#c6cbd1" strokeWidth="1.700"><circle cx="15.500" cy="9" r="8.300" /><path d="M9.500 15 .5 24.500" /></Icon>
        </TaskButton>
        <TaskButton $w={77} $line={61}>
          <Icon $w={33} $h={27} viewBox="0 0 33 27">
            <path d="M0 0H13L16 3H33V26H0Z" fill="#dba632" /><path d="M1 4H33V26H1Z" fill="#f3d472" /><path d="M6 26V17Q6 14 9 14H24Q27 14 27 17V26H21V21H12V26Z" fill="#3f95bf" /><path d="M12 21H21V26H12Z" fill="#f4d15a" />
          </Icon>
        </TaskButton>
        <TaskButton $w={73}>
          <Icon $w={33} $h={34} viewBox="0 0 34 34">
            <ellipse cx="15" cy="13" rx="15" ry="9" transform="rotate(-22 15 13)" fill="#a48791" /><ellipse cx="15.500" cy="10" rx="14.500" ry="8.500" transform="rotate(-22 15.500 10)" fill="#f3e4ea" /><path d="M15 12 24 3M14 11 21 19" stroke="#c0889b" strokeWidth="1.400" />
            <g fill="none" stroke="#35788c" strokeWidth="2.600"><ellipse cx="28" cy="20.500" rx="5" ry="3.200" transform="rotate(-20 28 20.500)" /><ellipse cx="22" cy="27.500" rx="3" ry="5.500" /></g>
          </Icon>
        </TaskButton>
        <TaskButton>
          <Icon $w={34} viewBox="0 0 35 35" fill="none">
            <path d="M31 25Q27 31 19.500 31A12.500 12.500 0 1 1 32 18.500H13" stroke="#63d4f4" strokeWidth="6" />
            <path d="M6 34C-3 30 6 12 20 4Q31-2 33 4Q34 7 32 11" stroke="#e9c93d" strokeWidth="2.600" />
          </Icon>
        </TaskButton>
        <TaskButton $w={77}>
          <Icon $w={33} $h={34} viewBox="0 0 33 34">
            <defs><linearGradient id="fox" x1="0" y1="1" x2="1" y2="0"><stop offset="0" stopColor="#e41f5c" /><stop offset=".45" stopColor="#f4502e" /><stop offset="1" stopColor="#ffe13a" /></linearGradient></defs>
            <circle cx="17" cy="15" r="12" fill="#2a5fb0" />
            <path d="M4 4 10 8Q13 6 16 7L12 12 18 14 13 18Q16 23 22 20 28 14 20 0 33 6 33 18 32 33 16.500 34 1 32 0 18 0 11 4 4Z" fill="url(#fox)" />
          </Icon>
        </TaskButton>
        <TaskButton $w={73}><OfficeIcon letter="O" color="#1272bf" kind="mail" /></TaskButton>
        <TaskButton $w={77} $line={61}><OfficeIcon letter="W" color="#2f539c" kind="doc" /></TaskButton>
        <TaskButton $w={74}><OfficeIcon letter="X" color="#21743f" kind="grid" /></TaskButton>
        <TaskButton><ChromeLogo /></TaskButton>
        <TaskButton $w={2} />
        <TaskButton $w={73} $line={73} $active>
          <ActiveChrome><ChromeLogo s={33} /><Avatar $size={23} $font={12}>u</Avatar></ActiveChrome>
        </TaskButton>
        <TaskButton $w={76} $line={60}>
          <Icon $w={36} viewBox="0 0 36 36" fill="none"><circle cx="18" cy="18" r="17" stroke="#8b97a8" strokeWidth="1.700" /><circle cx="18" cy="18" r="6" fill="#83c1dc" /></Icon>
        </TaskButton>
        <Tray>
          <TrayIcon $w={36}><Icon $w={19} $h={11} viewBox="0 0 19 11" fill="none" stroke="#c3c8cf" strokeWidth="1.700"><path d="M.6 10.500 9.500 1 18.400 10.500" /></Icon></TrayIcon>
          <TrayIcon $w={37}><Icon $w={16} $h={24} viewBox="0 0 16 24"><rect x="2.500" width="11" height="18" rx="1.500" fill="#fff" /><path d="M1 11V19H15V11M8 19V23M4 23H12" fill="none" stroke="#dfe2e6" strokeWidth="1.500" /></Icon></TrayIcon>
          <TrayIcon $w={36}><Icon $w={23} $h={20} viewBox="0 0 23 20" fill="none" stroke="#c3c8cf" strokeWidth="1.500"><path d="M1 6.500H4L9.500 1.500V18.500L4 13.500H1ZM13 7Q15 10 13 13M16 4.500Q19.500 10 16 15.500M19 2Q24 10 19 18" /></Icon></TrayIcon>
          <TrayIcon $w={38}><Icon $w={20} viewBox="0 0 20 20" fill="none" stroke="#aab1ba" strokeWidth="1.700"><path d="M.8 19Q1 2 19.500 1M5.500 19Q6 7 19.500 6M10 19Q11 12 19.500 11.500" /><circle cx="17" cy="17" r="2.200" fill="#fff" stroke="none" /></Icon></TrayIcon>
          <TrayIcon $w={33}><Icon $w={24} $h={17} viewBox="0 0 24 17" fill="none" stroke="#e8ebee" strokeWidth="1.500"><path d="M6 4H22V16H5V10" /><path d="M8 6H20V14H8Z" fill="#fff" /><path d="M22 7H24V13H22M1 0V4H6V0M3.500 4V9H7" /></Icon></TrayIcon>
          <Clock>16:45<br />21/12/2022</Clock>
          <TrayIcon $w={60}><Icon $w={25} $h={24} viewBox="0 0 25 24" fill="none" stroke="#c9ced4" strokeWidth="1.600"><path d="M1 1H24V19H16L12.500 23 9 19H1Z" /></Icon></TrayIcon>
          <TrayIcon $w={13} />
          <DesktopEdge />
        </Tray>
      </Taskbar>

      <Pointer>
        <PointerArrow viewBox="0 0 20 30">
          <path d="M1 1V24L6.500 19 10 27.500 14 26 10.500 17.500H17.500Z" fill="#fdfdfd" stroke="#555" strokeWidth="1.500" />
        </PointerArrow>
      </Pointer>
    </Screen>
  );
}
